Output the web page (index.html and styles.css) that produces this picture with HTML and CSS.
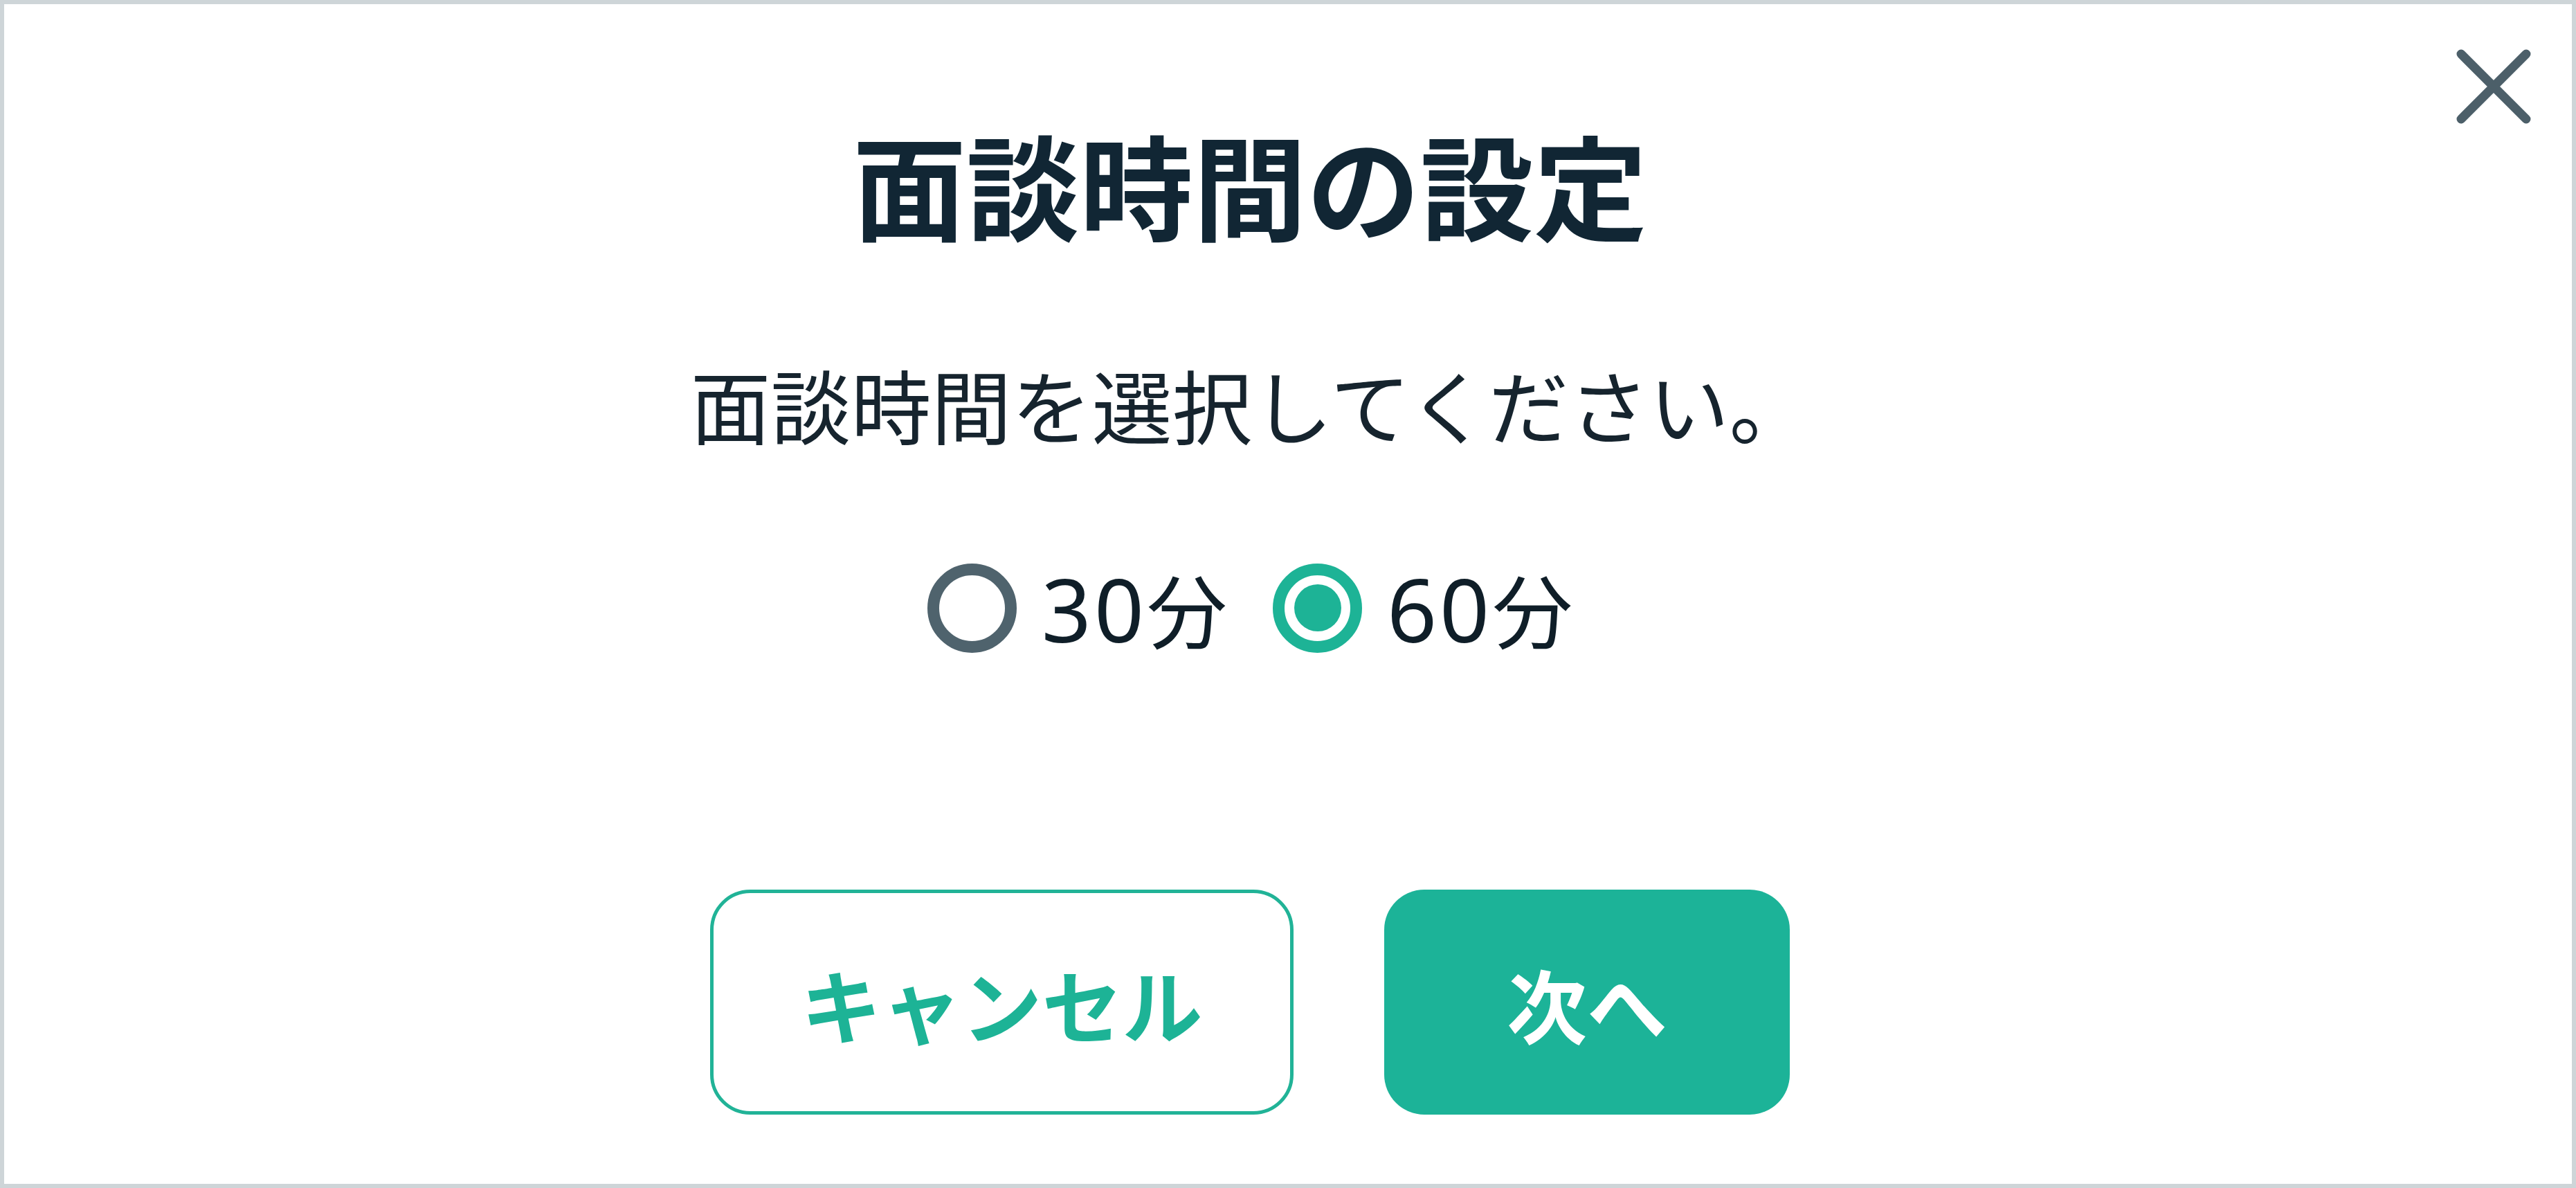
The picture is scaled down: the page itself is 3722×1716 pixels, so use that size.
FILE: index.html
```html
<!DOCTYPE html>
<html lang="ja">
<head>
<meta charset="utf-8">
<title>面談時間の設定</title>
<link rel="stylesheet" href="styles.css">
</head>
<body>
<div class="frame">
  <button class="close" type="button" aria-label="閉じる">
    <svg viewBox="0 0 120 120" width="120" height="120">
      <path d="M13 13 L107 107 M107 13 L13 107" stroke="#4c5f69" stroke-width="13" stroke-linecap="round" fill="none"/>
    </svg>
  </button>
  <div class="content">
    <h1 class="title">面談時間の設定</h1>
    <p class="lead">面談時間を選択してください。</p>
    <div class="options">
      <label class="option">
        <span class="radio"></span>
        <span class="opt-text"><span class="num">30</span>分</span>
      </label>
      <label class="option">
        <span class="radio checked"></span>
        <span class="opt-text"><span class="num">60</span>分</span>
      </label>
    </div>
    <div class="actions">
      <button class="btn btn-outline" type="button">キャンセル</button>
      <button class="btn btn-primary" type="button">次へ</button>
    </div>
  </div>
</div>
</body>
</html>
```

FILE: styles.css
```css
* {
  box-sizing: border-box;
}

html, body {
  margin: 0;
  padding: 0;
  background: #ffffff;
}

body {
  font-family: "Noto Sans CJK JP", "Noto Sans", sans-serif;
  color: #112634;
}

.frame {
  position: relative;
  width: 100vw;
  height: 100vh;
  border: 6px solid #ced5d8;
  background: #ffffff;
  overflow: hidden;
}

.close {
  position: absolute;
  top: 59px;
  right: 53px;
  width: 120px;
  height: 120px;
  padding: 0;
  border: 0;
  background: transparent;
  display: block;
}

.close svg {
  display: block;
}

.content {
  display: flex;
  flex-direction: column;
  align-items: center;
  padding: 176px 110px 0 0;
}

.title {
  margin: 0;
  font-size: 164px;
  line-height: 164px;
  font-weight: 700;
  color: #112634;
  white-space: nowrap;
}

.lead {
  margin: 178px 0 0;
  font-size: 116px;
  line-height: 116px;
  font-weight: 400;
  color: #16242e;
  white-space: nowrap;
}

.options {
  margin-top: 173px;
  display: flex;
  align-items: center;
  gap: 66px;
  height: 130px;
}

.option {
  display: flex;
  align-items: center;
  gap: 36px;
}

.radio {
  width: 129px;
  height: 129px;
  border-radius: 50%;
  border: 17px solid #4f636d;
  background: #ffffff;
  display: flex;
  align-items: center;
  justify-content: center;
}

.radio.checked {
  border-color: #1db396;
}

.radio.checked::after {
  content: "";
  width: 68px;
  height: 68px;
  border-radius: 50%;
  background: #1db396;
}

.opt-text {
  font-size: 116px;
  line-height: 130px;
  color: #0f1e28;
  white-space: nowrap;
}

.num {
  font-family: "Noto Sans", "Noto Sans CJK JP", sans-serif;
  font-size: 126px;
  letter-spacing: 4px;
}

.actions {
  margin-top: 342px;
  display: flex;
  gap: 131px;
}

.btn {
  height: 325px;
  border-radius: 58px;
  font-family: "Noto Sans CJK JP", "Noto Sans", sans-serif;
  font-size: 116px;
  font-weight: 700;
  line-height: 1;
  display: flex;
  align-items: center;
  justify-content: center;
  padding: 0;
  cursor: pointer;
}

.btn-outline {
  width: 843px;
  border: 5px solid #21b397;
  background: #ffffff;
  color: #1db396;
}

.btn-primary {
  width: 586px;
  border: 0;
  background: #1cb398;
  color: #ffffff;
}
```
